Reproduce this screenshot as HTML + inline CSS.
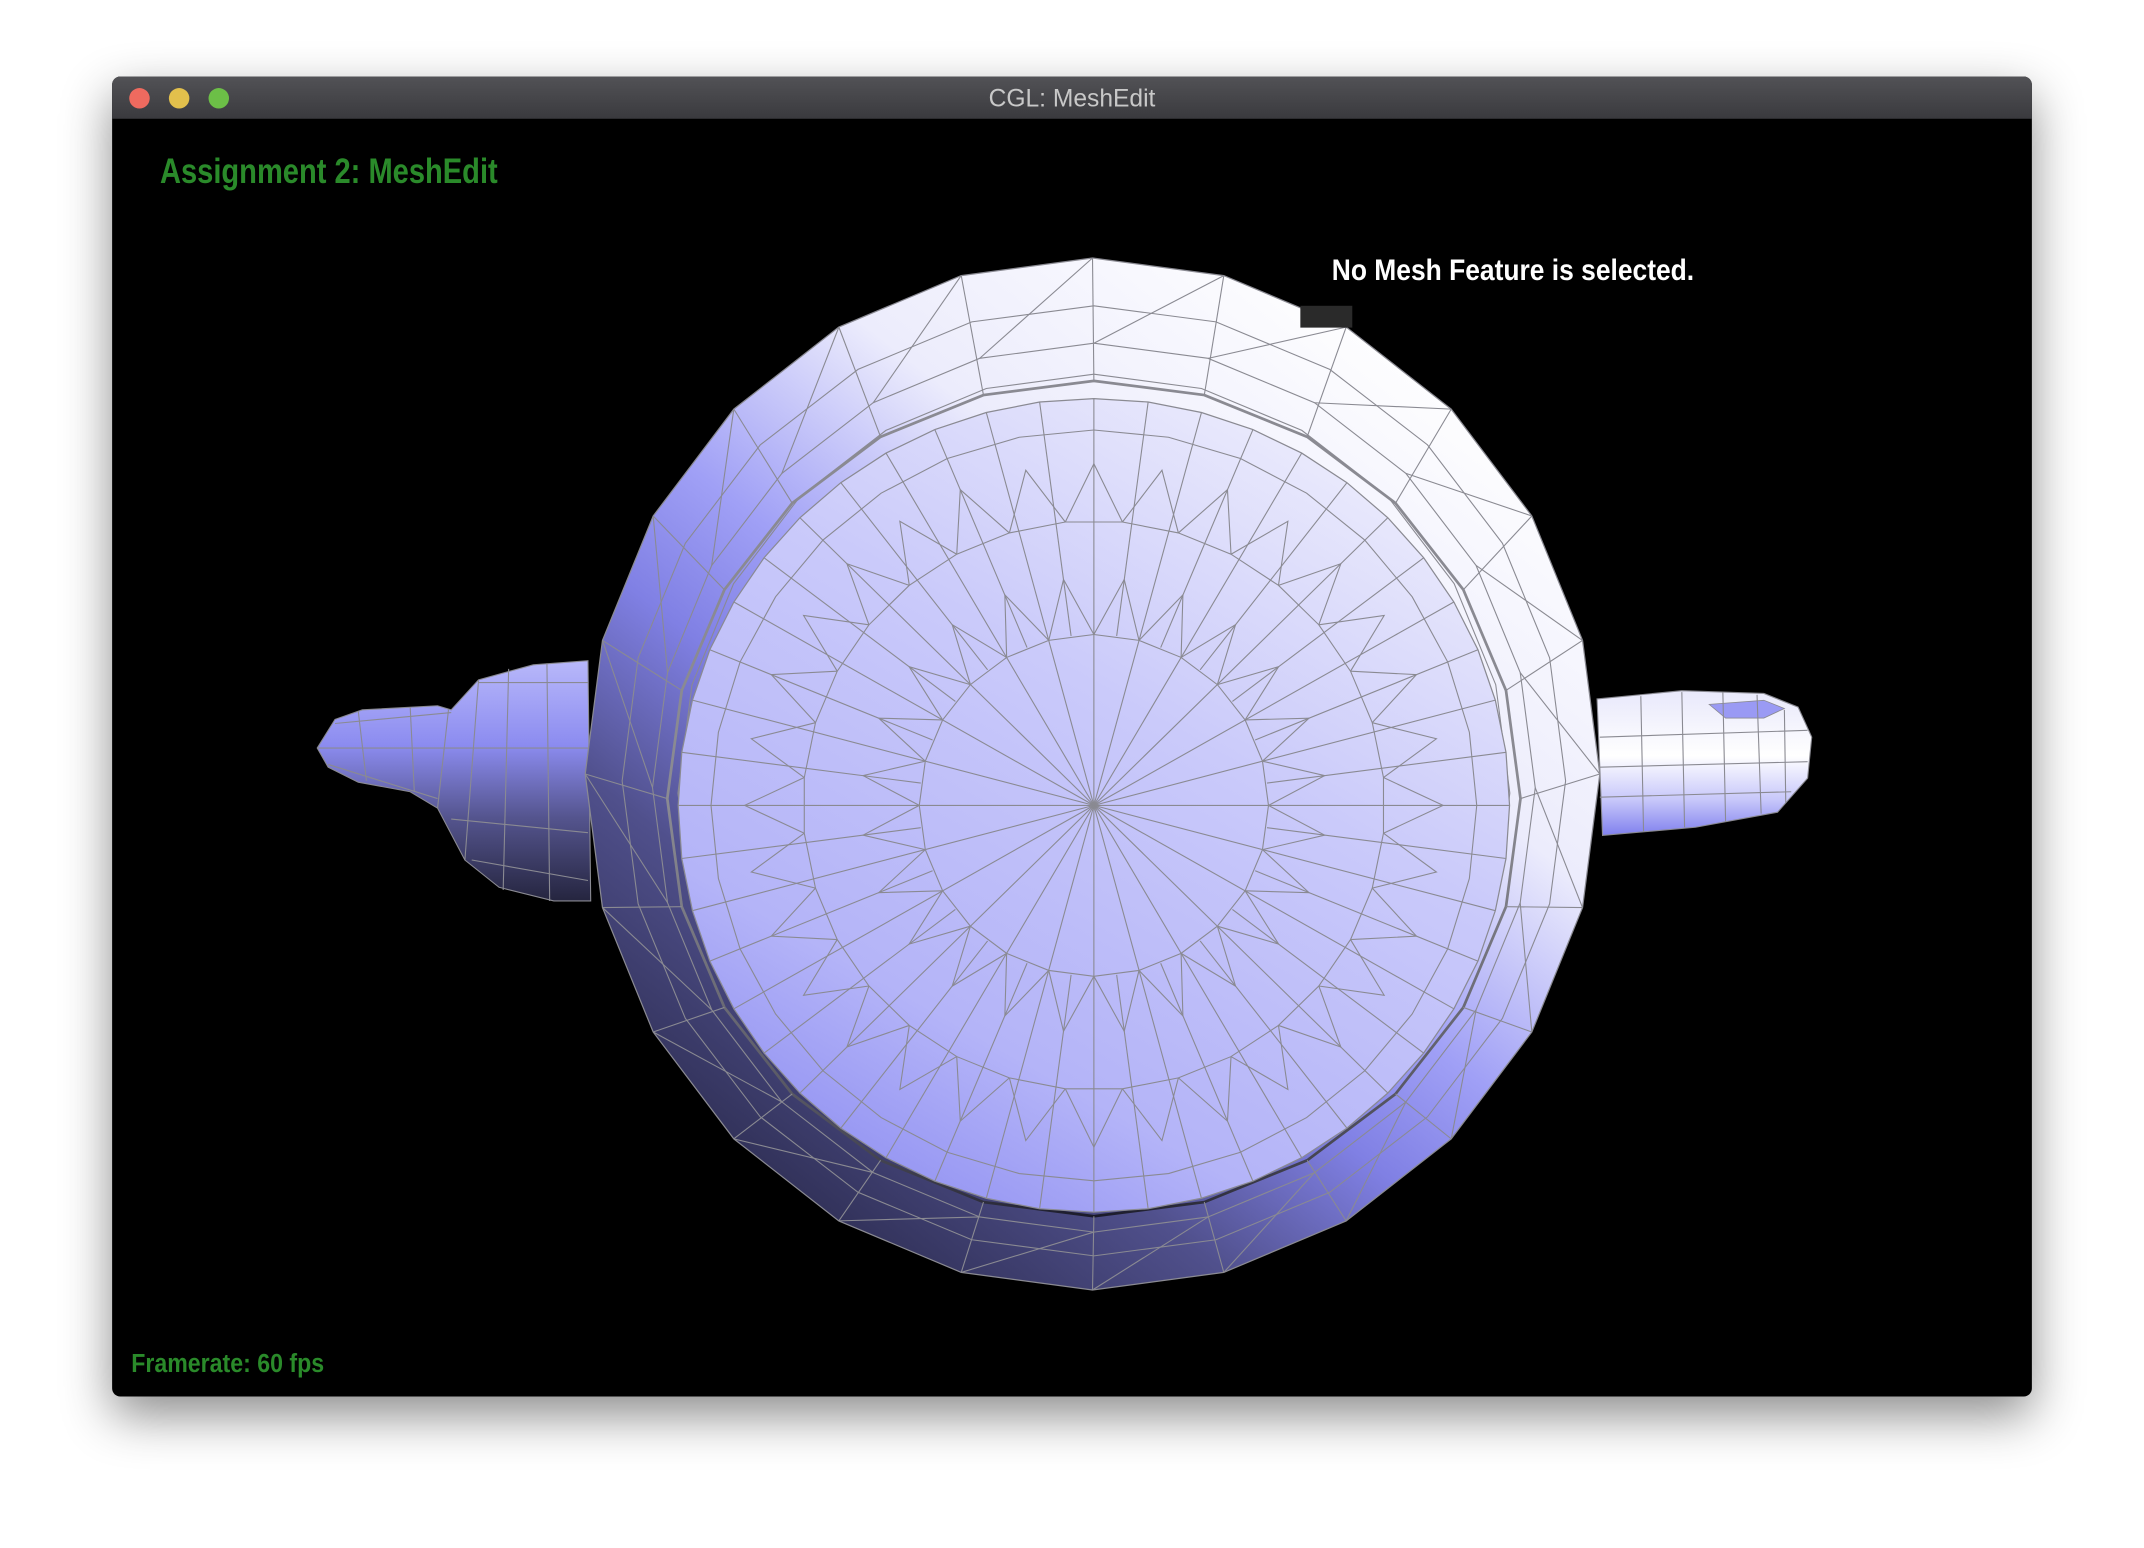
<!DOCTYPE html>
<html><head><meta charset="utf-8"><style>
html,body{margin:0;padding:0;background:#fff;width:2144px;height:1548px;overflow:hidden}
svg{display:block}
</style></head><body>
<svg id="s" width="2144" height="1548" viewBox="0 0 1568 1134" preserveAspectRatio="none" xmlns="http://www.w3.org/2000/svg">
<defs>
<filter id="sh" x="-10%" y="-10%" width="120%" height="125%"><feDropShadow dx="0" dy="14" stdDeviation="18" flood-color="#000" flood-opacity="0.45"/></filter>
<linearGradient id="tb" x1="0" y1="0" x2="0" y2="1"><stop offset="0" stop-color="#525256"/><stop offset="1" stop-color="#3a3a3e"/></linearGradient>
<linearGradient id="bd" x1="0.85" y1="0.1" x2="0.2" y2="0.95"><stop offset="0" stop-color="#ffffff"/><stop offset="0.3" stop-color="#ececfc"/><stop offset="0.5" stop-color="#a0a0f6"/><stop offset="0.62" stop-color="#8080e4"/><stop offset="0.78" stop-color="#50508c"/><stop offset="1" stop-color="#2c2c50"/></linearGradient>
<linearGradient id="ds" x1="0.85" y1="0.05" x2="0.3" y2="1"><stop offset="0" stop-color="#eeeefc"/><stop offset="0.4" stop-color="#cacafa"/><stop offset="0.8" stop-color="#b4b4f8"/><stop offset="1" stop-color="#9494f2"/></linearGradient>
<linearGradient id="sp" x1="0" y1="0" x2="0" y2="1"><stop offset="0" stop-color="#b8b8fa"/><stop offset="0.35" stop-color="#8c8cf0"/><stop offset="0.65" stop-color="#55558f"/><stop offset="1" stop-color="#25253f"/></linearGradient>
<linearGradient id="hd" x1="0" y1="0" x2="0" y2="1"><stop offset="0" stop-color="#e8e8fb"/><stop offset="0.45" stop-color="#ffffff"/><stop offset="0.75" stop-color="#c8c8fa"/><stop offset="1" stop-color="#8080ee"/></linearGradient>
<radialGradient id="rimg" cx="0.5" cy="1" r="0.7"><stop offset="0" stop-color="#1a1a2a"/><stop offset="1" stop-color="#8a8a92"/></radialGradient>
</defs>
<rect x="82" y="56" width="1404" height="967" rx="6" fill="#000" filter="url(#sh)"/>
<path d="M82 87 V62 a6 6 0 0 1 6 -6 H1480 a6 6 0 0 1 6 6 V87 Z" fill="url(#tb)"/>
<circle cx="102" cy="72" r="7.5" fill="#ee6a5f"/>
<circle cx="131" cy="72" r="7.5" fill="#e2c04c"/>
<circle cx="160" cy="72" r="7.5" fill="#6cbf47"/>
<text x="784" y="78" text-anchor="middle" font-family="Liberation Sans, sans-serif" font-size="18" fill="#c8c8c8">CGL: MeshEdit</text>
<g id="mesh"></g>
<text x="117" y="134" font-family="Liberation Sans Narrow, Liberation Sans, sans-serif" font-weight="bold" font-size="26" fill="#2a8a2a" textLength="247" lengthAdjust="spacingAndGlyphs">Assignment 2: MeshEdit</text>
<rect x="951" y="224" width="38" height="16" fill="#2a2a2a"/>
<text x="974" y="205" font-family="Liberation Sans Narrow, Liberation Sans, sans-serif" font-weight="bold" font-size="22" fill="#fff" textLength="265" lengthAdjust="spacingAndGlyphs">No Mesh Feature is selected.</text>
<text x="96" y="1005" font-family="Liberation Sans Narrow, Liberation Sans, sans-serif" font-weight="bold" font-size="19" fill="#2a8a2a" textLength="141" lengthAdjust="spacingAndGlyphs">Framerate: 60 fps</text>
</svg>
<script>
(function(){
var g=document.getElementById('mesh'),h='';
var L='stroke="#8a8a92" stroke-width="0.8" fill="none"';
function P(pts){return pts.map(function(p){return p[0].toFixed(1)+','+p[1].toFixed(1)}).join(' ')}
// spout
h+='<polygon points="232,548 245,527 265,520 320,517 330,520 350,498 390,487 430,484 432,660 405,660 365,650 340,630 320,592 300,580 262,573 240,562" fill="url(#sp)" stroke="#8a8a92" stroke-width="0.8"/>';
[[262,521,268,572],[300,518,303,580],[328,520,320,592],[350,498,340,630],[372,490,368,652],[400,486,402,660]].forEach(function(a){h+='<line x1="'+a[0]+'" y1="'+a[1]+'" x2="'+a[2]+'" y2="'+a[3]+'" '+L+'/>'});
[[232,548,430,548],[245,530,330,522],[350,500,430,500],[240,560,320,585],[330,600,430,610],[345,630,430,645]].forEach(function(a){h+='<line x1="'+a[0]+'" y1="'+a[1]+'" x2="'+a[2]+'" y2="'+a[3]+'" '+L+'/>'});
// handle
h+='<path d="M1168 512 L1230 506 L1290 508 L1315 518 L1325 540 L1322 570 L1300 595 L1240 606 L1172 612 Z" fill="url(#hd)" stroke="#8a8a92" stroke-width="0.8"/>';
h+='<path d="M1250 516 L1290 513 L1305 519 L1290 526 L1262 526 Z" fill="#9a9af4" stroke="#8a8a92" stroke-width="0.6"/>';
[[1200,510,1202,609],[1230,507,1232,606],[1260,507,1262,602],[1285,509,1288,596],[1305,520,1306,588]].forEach(function(a){h+='<line x1="'+a[0]+'" y1="'+a[1]+'" x2="'+a[2]+'" y2="'+a[3]+'" '+L+'/>'});
[[1170,540,1322,535],[1170,562,1322,558],[1170,584,1310,580]].forEach(function(a){h+='<line x1="'+a[0]+'" y1="'+a[1]+'" x2="'+a[2]+'" y2="'+a[3]+'" '+L+'/>'});
// body
var N=24,cx=799,cy=567,rx=371,ry=378;
function poly(cx,cy,rx,ry,n,off){var a=[];for(var i=0;i<n;i++){var t=(i+off)/n*2*Math.PI-Math.PI/2;a.push([cx+rx*Math.cos(t),cy+ry*Math.sin(t)])}return a}
var o=poly(cx,cy,rx,ry,N,0);
h+='<polygon points="'+P(o)+'" fill="url(#bd)" stroke="#8a8a92" stroke-width="0.9"/>';
var rings=[[0.93,572],[0.87,577],[0.82,581]];
var rs=rings.map(function(r){return poly(cx+1,r[1],rx*r[0],ry*r[0]*0.99,N,0)});
rs.forEach(function(r){h+='<polygon points="'+P(r)+'" '+L+'/>'});
var rim=poly(800,585,312,306,N,0);
h+='<polygon points="'+P(rim)+'" fill="none" stroke="url(#rimg)" stroke-width="2"/>';
for(var i=0;i<N;i++){var a=o[i],b=rim[i],c=o[(i+1)%N];h+='<line x1="'+a[0]+'" y1="'+a[1]+'" x2="'+b[0]+'" y2="'+b[1]+'" '+L+'/>';var m=rs[1][i];h+='<line x1="'+c[0]+'" y1="'+c[1]+'" x2="'+m[0]+'" y2="'+m[1]+'" '+L+'/>';}
// disc
var D=poly(800,590,304,298,48,0);
h+='<polygon points="'+P(D)+'" fill="url(#ds)" stroke="#8a8a92" stroke-width="0.9"/>';
var D2=poly(800,590,280,275,32,0);
h+='<polygon points="'+P(D2)+'" '+L+'/>';
var fr=[0.42,0.7];
fr.forEach(function(f,k){var n=k==0?24:32;var r=poly(800,590,304*f,298*f,n,k*0.5);h+='<polygon points="'+P(r)+'" '+L+'/>';
 var r2=poly(800,590,304*(f+0.14),298*(f+0.14),n,k*0.5+0.5);
 for(var i=0;i<r.length;i++){var p=r[i],q=r2[i],s=r[(i+1)%r.length];h+='<polyline points="'+P([p,q,s])+'" '+L+'/>';}});
for(var i=0;i<48;i++){var p=D[i];var f=(i%2)?0.42:0;var sx=800+(p[0]-800)*f,sy=590+(p[1]-590)*f;h+='<line x1="'+sx+'" y1="'+sy+'" x2="'+p[0]+'" y2="'+p[1]+'" '+L+'/>';}
g.innerHTML=h;
})();
</script>
</body></html>
